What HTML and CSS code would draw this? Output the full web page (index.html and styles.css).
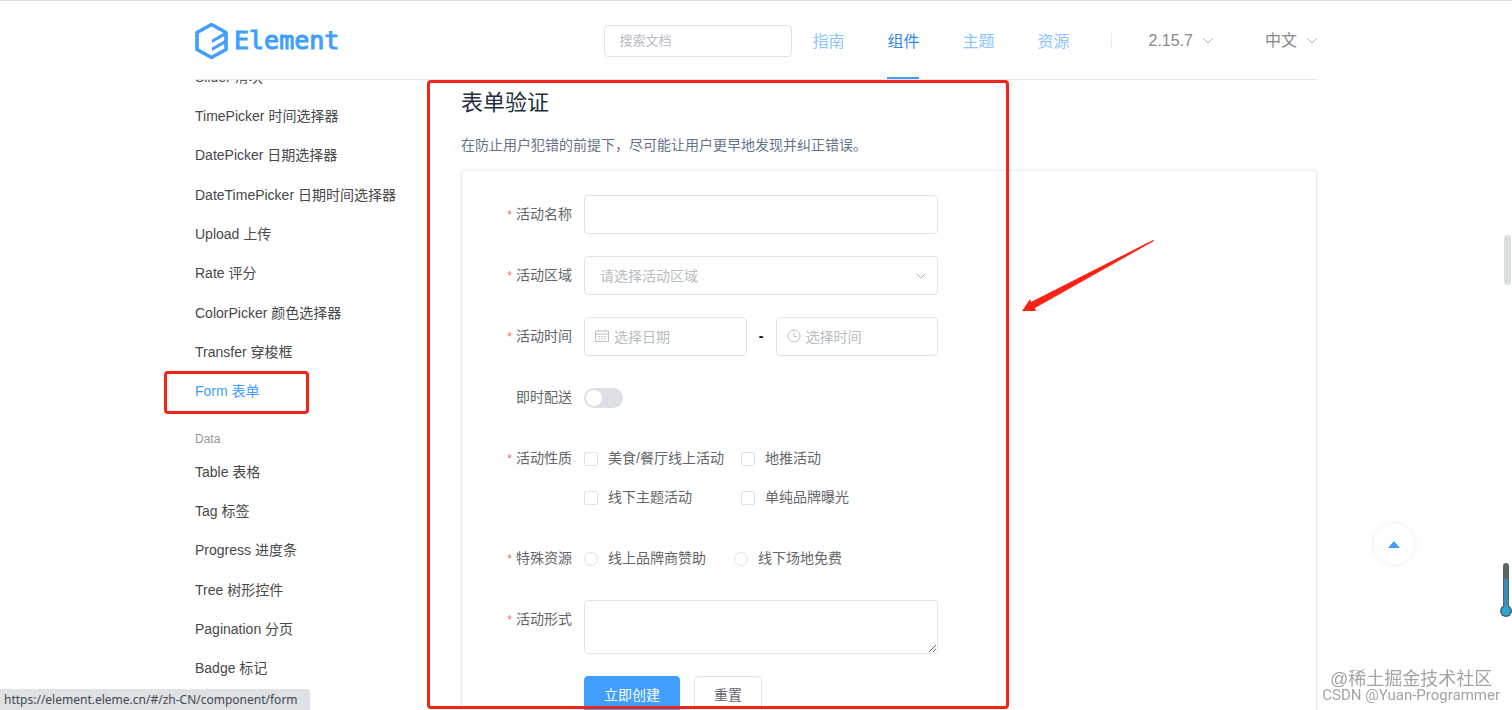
FILE: index.html
```html
<!DOCTYPE html>
<html lang="zh-CN">
<head>
    <meta charset="UTF-8">
    <meta name="viewport" content="width=device-width, initial-scale=1.0">
    <title>Element</title>
    <link rel="stylesheet" href="styles.css">
</head>
<body>
    <div class="page">
        <header class="header">
            <a href="#" class="logo">
                <svg width="33" height="38" viewBox="0 0 33 38" fill="none" stroke="#409eff">
                    <path d="M16.500 2.500 L31 10.500 V27.500 L16.500 35.500 L2 27.500 V10.500 Z" stroke-width="3.600" stroke-linejoin="round"/>
                    <path d="M17 17.500 L31 9.500 V13 L17 21 Z M17 25.500 L31 17.500 V21 L17 29 Z" fill="#409eff" stroke="none"/>
                </svg>
                <span>Element</span>
            </a>
            <input type="text" class="search" placeholder="搜索文档" aria-label="搜索文档">
            <nav class="nav">
                <a href="#">指南</a>
                <a href="#" class="active">组件</a>
                <a href="#">主题</a>
                <a href="#">资源</a>
            </nav>
            <div class="dropdowns">
                <button class="dropdown">2.15.7
                    <svg width="10" height="6" viewBox="0 0 10 6"><path d="M0.500 0.500 L5 5 L9.500 0.500"/></svg>
                </button>
                <button class="dropdown">中文
                    <svg width="10" height="6" viewBox="0 0 10 6"><path d="M0.500 0.500 L5 5 L9.500 0.500"/></svg>
                </button>
            </div>
        </header>

        <div class="container">
            <aside class="sidebar">
                <ul class="menu menu-form">
                    <li><a href="#">Slider 滑块</a></li>
                    <li><a href="#">TimePicker 时间选择器</a></li>
                    <li><a href="#">DatePicker 日期选择器</a></li>
                    <li><a href="#">DateTimePicker 日期时间选择器</a></li>
                    <li><a href="#">Upload 上传</a></li>
                    <li><a href="#">Rate 评分</a></li>
                    <li><a href="#">ColorPicker 颜色选择器</a></li>
                    <li><a href="#">Transfer 穿梭框</a></li>
                    <li><a href="#" class="active">Form 表单</a></li>
                </ul>
                <div class="menu-title">Data</div>
                <ul class="menu menu-data">
                    <li><a href="#">Table 表格</a></li>
                    <li><a href="#">Tag 标签</a></li>
                    <li><a href="#">Progress 进度条</a></li>
                    <li><a href="#">Tree 树形控件</a></li>
                    <li><a href="#">Pagination 分页</a></li>
                    <li><a href="#">Badge 标记</a></li>
                </ul>
            </aside>

            <main class="content">
                <h2>表单验证</h2>
                <p>在防止用户犯错的前提下，尽可能让用户更早地发现并纠正错误。</p>
                <div class="demo">
                    <form class="form">
                        <div class="form-item">
                            <label class="label required" for="name">活动名称</label>
                            <input type="text" id="name" class="input">
                        </div>
                        <div class="form-item">
                            <label class="label required" for="region">活动区域</label>
                            <div class="field">
                                <select id="region" class="input select">
                                    <option>请选择活动区域</option>
                                </select>
                                <svg class="arrow" width="10" height="6" viewBox="0 0 10 6"><path d="M0.500 0.500 L5 5 L9.500 0.500"/></svg>
                            </div>
                        </div>
                        <div class="form-item">
                            <label class="label required" for="date">活动时间</label>
                            <div class="times">
                                <div class="field">
                                    <svg class="prefix" width="14" height="14" viewBox="0 0 14 14">
                                        <path d="M0.500 2 H13.500 V12.500 H0.500 Z M0.500 5 H13.500 M3.500 0.500 V3 M10.500 0.500 V3 M3 7.500 H5 M6 7.500 H8 M9 7.500 H11 M3 10 H5 M6 10 H8 M9 10 H11"/>
                                    </svg>
                                    <input type="text" id="date" class="input with-icon" placeholder="选择日期">
                                </div>
                                <span class="dash">-</span>
                                <div class="field">
                                    <svg class="prefix" width="14" height="14" viewBox="0 0 14 14">
                                        <circle cx="7" cy="7" r="6"/>
                                        <path d="M7 3.500 V7.500 H10"/>
                                    </svg>
                                    <input type="text" class="input with-icon" placeholder="选择时间" aria-label="选择时间">
                                </div>
                            </div>
                        </div>
                        <div class="form-item">
                            <label class="label" for="delivery">即时配送</label>
                            <input type="checkbox" role="switch" id="delivery" class="switch">
                        </div>
                        <div class="form-item">
                            <span class="label required">活动性质</span>
                            <div class="checks">
                                <label class="option"><input type="checkbox">美食/餐厅线上活动</label>
                                <label class="option"><input type="checkbox">地推活动</label>
                                <label class="option"><input type="checkbox">线下主题活动</label>
                                <label class="option"><input type="checkbox">单纯品牌曝光</label>
                            </div>
                        </div>
                        <div class="form-item">
                            <span class="label required">特殊资源</span>
                            <div class="radios">
                                <label class="option"><input type="radio" name="resource">线上品牌商赞助</label>
                                <label class="option"><input type="radio" name="resource">线下场地免费</label>
                            </div>
                        </div>
                        <div class="form-item">
                            <label class="label required" for="desc">活动形式</label>
                            <textarea id="desc" class="input textarea"></textarea>
                        </div>
                        <div class="form-item">
                            <span class="label"></span>
                            <div class="buttons">
                                <button type="button" class="btn primary">立即创建</button>
                                <button type="reset" class="btn">重置</button>
                            </div>
                        </div>
                    </form>
                </div>
                <div class="mark mark-content"></div>
                <svg class="pointer" width="132" height="72" viewBox="0 0 132 72">
                    <path d="M131 0 L132 1 L13 68 L14 71 L0 71 L8 59 L9 62 Z" fill="#fb2314"/>
                </svg>
            </main>
            <div class="mark mark-menu"></div>
        </div>
    </div>

    <button class="backtop" aria-label="回到顶部">
        <svg width="12" height="7" viewBox="0 0 12 7"><path d="M6 0 L12 7 H0 Z" fill="#409eff"/></svg>
    </button>
    <div class="scroll-thumb"></div>
    <svg class="thermometer" width="12" height="56" viewBox="0 0 12 56">
        <rect x="3" y="1" width="6" height="48" rx="3" fill="#5c6468"/>
        <circle cx="6" cy="49" r="6" fill="#4c5c64"/>
        <rect x="4" y="17" width="4" height="30" fill="#3a8fb7"/>
        <circle cx="6" cy="49" r="4.500" fill="#30a5d5"/>
    </svg>
    <div class="watermark">
        <span class="juejin">@稀土掘金技术社区</span>
        <span class="csdn">CSDN @Yuan-Programmer</span>
    </div>
    <div class="status-bar">https://element.eleme.cn/#/zh-CN/component/form</div>
</body>
</html>
```
FILE: styles.css
```css
:root {
    --primary: #409eff;
    --border: #dfe2e8;
    --text: #64666a;
    --placeholder: #b8bcc4;
    --mark: #f02418;
}

* {
    margin: 0;
    padding: 0;
    box-sizing: border-box;
}

body {
    height: 100vh;
    overflow: hidden;
    border-top: 1px solid #dcdcdc;
    background: #fff;
    color: var(--text);
    font-family: "Liberation Sans", "Noto Sans CJK SC", sans-serif;
    font-size: 14px;
}

a {
    text-decoration: none;
}

button,
input,
select,
textarea {
    font: inherit;
    color: inherit;
}

ul {
    list-style: none;
}

.page {
    max-width: 1122px;
    margin: 0 auto;
}

/* header */
.header {
    height: 79px;
    display: flex;
    align-items: center;
    padding-top: 1px;
    border-bottom: 1px solid #e4e6e9;
}

.logo {
    display: flex;
    align-items: center;
    gap: 6px;
    color: var(--primary);
    font-family: "DejaVu Sans Mono", monospace;
    font-size: 25px;
    line-height: 38px;
    -webkit-text-stroke: 1px var(--primary);
}

.search {
    width: 188px;
    height: 32px;
    margin-left: auto;
    padding: 0 14px;
    border: 1px solid var(--border);
    border-radius: 4px;
    font-size: 13px;
}

::placeholder {
    color: var(--placeholder);
    opacity: 1;
}

.nav {
    align-self: stretch;
    display: flex;
    gap: 43px;
    margin-left: 20px;
    font-size: 16px;
}

.nav a {
    display: flex;
    align-items: center;
    border-bottom: 2px solid transparent;
    color: #8cc5ff;
}

.nav a.active {
    color: #3688ea;
    border-bottom-color: var(--primary);
}

.dropdowns {
    display: flex;
    gap: 52px;
    margin-left: 41px;
    padding-left: 37px;
    border-left: 1px solid #ebebeb;
    line-height: 16px;
}

.dropdown {
    display: flex;
    align-items: center;
    gap: 10px;
    border: none;
    background: none;
    color: #888;
    font-size: 16px;
    line-height: 16px;
    cursor: pointer;
}

.dropdown path,
.arrow path {
    fill: none;
    stroke: #b0b3b8;
}

/* sidebar */
.container {
    display: flex;
    position: relative;
}

.sidebar {
    width: 266px;
    flex-shrink: 0;
    height: calc(100vh - 80px);
    overflow: hidden;
}

.menu {
    display: grid;
    grid-auto-rows: 1fr;
    align-items: center;
}

.menu-form {
    height: 354px;
    margin-top: -24px;
}

.menu-data {
    height: 236px;
}

.menu a {
    color: #484848;
}

.menu a.active {
    color: var(--primary);
}

.menu-title {
    padding-top: 17px;
    color: #999;
    font-size: 12px;
    line-height: 24px;
}

/* content */
.content {
    flex: 1;
    position: relative;
}

.content h2 {
    margin-top: 8px;
    color: #1f2f3d;
    font-size: 22px;
    font-weight: 400;
    line-height: 30px;
}

.content p {
    margin: 14px 0 11px;
    color: #66748a;
    line-height: 27px;
}

.demo {
    padding: 24px;
    border: 1px solid #ebebeb;
    border-radius: 3px;
    box-shadow: 0 0 3px #f0f0f0;
}

.form {
    max-width: 452px;
}

.form-item {
    display: grid;
    grid-template-columns: 98px 1fr;
    margin-bottom: 22px;
}

.label {
    padding-right: 12px;
    line-height: 39px;
    text-align: right;
}

.required::before {
    content: "*";
    margin-right: 4px;
    color: #f56c6c;
    font-size: 12px;
    line-height: 1;
}

.input {
    display: block;
    width: 100%;
    height: 39px;
    padding: 0 15px;
    border: 1px solid var(--border);
    border-radius: 4px;
    background: #fff;
}

.select {
    appearance: none;
    color: var(--placeholder);
}

.field {
    position: relative;
}

.arrow {
    position: absolute;
    top: 17px;
    right: 12px;
}

.prefix {
    position: absolute;
    top: 12px;
    left: 11px;
    fill: none;
    stroke: #bcc0c8;
}

.with-icon {
    padding: 0 29px;
}

.times {
    display: grid;
    grid-template-columns: 1fr 29px 1fr;
}

.dash {
    color: #000;
    font-weight: 700;
    line-height: 39px;
    text-align: center;
}

.switch {
    appearance: none;
    align-self: center;
    display: flex;
    width: 39px;
    height: 20px;
    padding: 2px;
    border-radius: 10px;
    background: #dcdfe6;
}

.switch::before {
    content: "";
    width: 16px;
    height: 16px;
    border-radius: 50%;
    background: #fff;
}

.switch:checked {
    justify-content: flex-end;
    background: var(--primary);
}

.checks {
    display: grid;
    grid-template-columns: 157px 1fr;
}

.radios {
    display: flex;
    gap: 28px;
}

.option {
    display: flex;
    align-items: center;
    gap: 10px;
    line-height: 39px;
    white-space: nowrap;
}

.option input {
    appearance: none;
    width: 14px;
    height: 14px;
    border: 1px solid var(--border);
    border-radius: 2px;
}

.option input[type="radio"] {
    border-radius: 50%;
}

.option input:checked {
    background: var(--primary);
}

.textarea {
    height: 54px;
    padding: 5px 15px;
    resize: vertical;
}

.buttons {
    display: flex;
    gap: 14px;
}

.btn {
    height: 39px;
    padding: 0 19px 3px;
    border: 1px solid var(--border);
    border-radius: 4px;
    background: #fff;
    cursor: pointer;
}

.btn.primary {
    border-color: var(--primary);
    background: var(--primary);
    color: #fff;
}

/* red marks over the page */
.mark {
    position: absolute;
    border: 3px solid var(--mark);
    border-radius: 4px;
    pointer-events: none;
}

.mark-content {
    top: 0;
    left: -34px;
    width: 582px;
    height: calc(100vh - 81px);
}

.mark-menu {
    top: 291px;
    left: -31px;
    width: 145px;
    height: 43px;
}

.pointer {
    position: absolute;
    top: 160px;
    left: 561px;
}

/* floating things */
.backtop {
    position: fixed;
    right: 98px;
    bottom: 146px;
    width: 40px;
    height: 40px;
    display: flex;
    align-items: center;
    justify-content: center;
    border: none;
    border-radius: 50%;
    background: #fff;
    box-shadow: 0 0 6px rgba(0, 0, 0, 0.08);
    cursor: pointer;
}

.scroll-thumb {
    position: fixed;
    top: 235px;
    right: 1px;
    width: 7px;
    height: 50px;
    border-radius: 3px;
    background: #dcdfdf;
}

.thermometer {
    position: fixed;
    right: 0;
    bottom: 92px;
}

.watermark {
    position: fixed;
    right: 12px;
    bottom: 7px;
    display: flex;
    flex-direction: column;
    align-items: center;
    color: #a4a4a4;
    line-height: 16px;
}

.juejin {
    font-size: 18px;
}

.csdn {
    font-family: Roboto, sans-serif;
    font-size: 15px;
}

.status-bar {
    position: fixed;
    left: 0;
    bottom: 0;
    padding: 0 12px 0 4px;
    border-top-right-radius: 4px;
    background: #dee1e6;
    color: #45484c;
    font-family: "Noto Sans", sans-serif;
    font-size: 12px;
    line-height: 21px;
}
```
